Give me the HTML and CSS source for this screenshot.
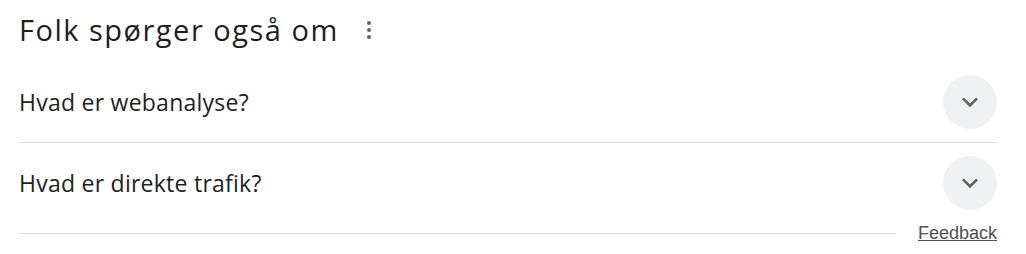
FILE: index.html
```html
<!DOCTYPE html>
<html lang="da">
<head>
    <meta charset="UTF-8">
    <meta name="viewport" content="width=device-width, initial-scale=1.0">
    <title>Folk spørger også om</title>
    <link rel="stylesheet" href="styles.css">
</head>
<body>

    <div class="paa">
        <!-- Header -->
        <div class="paa-header">
            <h2>Folk spørger også om</h2>
            <span class="kebab">
                <svg width="24" height="24" viewBox="0 0 24 24"><circle cx="12" cy="5" r="2"/><circle cx="12" cy="12" r="2"/><circle cx="12" cy="19" r="2"/></svg>
            </span>
        </div>

        <!-- Questions -->
        <div class="question">
            <span class="question-text">Hvad er webanalyse?</span>
            <span class="expand">
                <svg width="32" height="32" viewBox="0 0 24 24"><path d="M16.59 8.59L12 13.17 7.41 8.59 6 10l6 6 6-6z"/></svg>
            </span>
        </div>
        <div class="question last">
            <span class="question-text">Hvad er direkte trafik?</span>
            <span class="expand">
                <svg width="32" height="32" viewBox="0 0 24 24"><path d="M16.59 8.59L12 13.17 7.41 8.59 6 10l6 6 6-6z"/></svg>
            </span>
        </div>

        <!-- Footer -->
        <div class="paa-footer">
            <div class="line"></div>
            <a href="#" class="feedback">Feedback</a>
        </div>
    </div>

</body>
</html>
```

FILE: styles.css
```css
/* Basic Styles */
body {
    font-family: 'Open Sans', 'Roboto', sans-serif;
    background-color: #fff;
    color: #1f1f1f;
    margin: 0;
    padding: 0;
}
.paa {
    width: 978px;
    margin-left: 19px;
}
.paa-header {
    display: flex;
    align-items: center;
    height: 62px;
}
.paa-header h2 {
    font-size: 29px;
    font-weight: 400;
    letter-spacing: 1.5px;
    margin: 0;
    line-height: 38px;
    padding-bottom: 2px;
}
.kebab {
    display: flex;
    margin-left: 18px;
    padding-bottom: 2px;
}
.kebab svg {
    fill: #5f6368;
}
.question {
    display: flex;
    align-items: center;
    justify-content: space-between;
    height: 80px;
    border-bottom: 1px solid #dadce0;
}
.question.last {
    border-bottom: none;
}
.question-text {
    font-size: 23px;
    letter-spacing: 0.25px;
    line-height: 30px;
}
.expand {
    display: flex;
    align-items: center;
    justify-content: center;
    width: 54px;
    height: 54px;
    border-radius: 50%;
    background-color: #f0f1f2;
}
.expand svg {
    fill: #5f6368;
}
.paa-footer {
    display: flex;
    align-items: center;
    height: 20px;
}
.line {
    flex: 1;
    height: 1px;
    background-color: #dadce0;
    margin-right: 22px;
    margin-top: 1px;
}
.feedback {
    font-family: 'Liberation Sans', Arial, sans-serif;
    font-size: 18px;
    color: #4d5156;
    text-decoration: underline;
}
```
